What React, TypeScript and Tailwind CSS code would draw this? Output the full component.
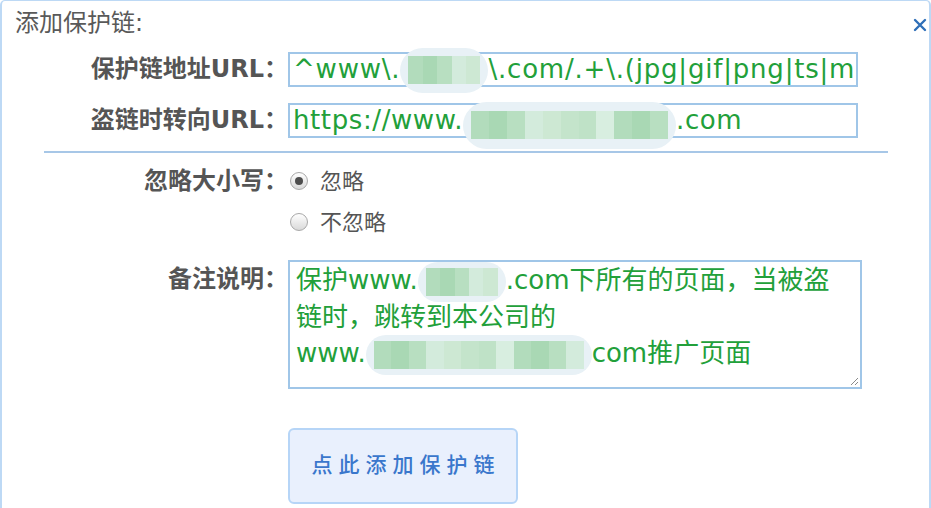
import React from 'react';

const tones = [
  'bg-[#c4e4cb]',
  'bg-[#b2dcbc]',
  'bg-[#d3ebdc]',
  'bg-[#bfe2c7]',
  'bg-[#a9d8b4]',
  'bg-[#cde8d3]',
  'bg-[#d8eee0]',
  'bg-[#b8dfc1]',
];

// pixelated blob covering the hidden domain
const Blur = ({ className, cells }: { className: string; cells: number }) => (
  <span
    className={`inline-flex items-center align-middle rounded-full bg-[#e8f1f6] px-[8px] ${className}`}
  >
    <span className="flex h-[28px] w-full">
      {Array.from({ length: cells }).map((_, i) => (
        <span key={i} className={`flex-1 ${tones[(i * 3 + 1) % tones.length]}`} />
      ))}
    </span>
  </span>
);

const Radio = ({ checked }: { checked?: boolean }) => (
  <span className="flex h-[18px] w-[18px] shrink-0 items-center justify-center rounded-full border border-[#a8a8a8] bg-linear-to-b from-white to-[#d9d9d9]">
    {checked && <span className="h-[8px] w-[8px] rounded-full bg-[#4d4d4d]" />}
  </span>
);

const Label = ({ children, className = '' }: { children: React.ReactNode; className?: string }) => (
  <span className={`w-[286px] shrink-0 text-right text-[24px] font-bold text-[#555] ${className}`}>
    {children}
  </span>
);

export default function App() {
  return (
    <div className="h-[508px] w-[931px] overflow-hidden rounded-t-[5px] border-x-2 border-t border-[#bdd9f5] bg-white font-['DejaVu_Sans','Noto_Sans_CJK_SC',sans-serif]">
      <div className="flex items-start justify-between pl-[13px] pr-[2px] pt-[8px]">
        <h3 className="text-[24px] leading-[28px] text-[#595959]">添加保护链:</h3>
        <svg width="14" height="14" viewBox="0 0 14 14" className="mt-[9px]">
          <path d="M2 2L12 12M12 2L2 12" stroke="#2f6fb8" strokeWidth="2.4" strokeLinecap="round" />
        </svg>
      </div>

      <div className="mt-[14px] flex items-center">
        <Label>保护链地址URL：</Label>
        <div className="h-[35px] w-[570px] overflow-x-clip whitespace-nowrap border-2 border-[#a0c6e8] px-[3px] text-[26px] leading-[31px] tracking-[0.8px] text-[#22a03a]">
          ^www\.<Blur className="-my-[7px] h-[45px] w-[88px]" cells={5} />\.com/.+\.(jpg|gif|png|ts|m
        </div>
      </div>

      <div className="mt-[15px] flex items-center">
        <Label>盗链时转向URL：</Label>
        <div className="h-[35px] w-[570px] overflow-x-clip whitespace-nowrap border-2 border-[#a0c6e8] px-[3px] text-[26px] leading-[31px] tracking-[0.6px] text-[#22a03a]">
          https://www.<Blur className="relative top-[4px] -my-[8px] h-[47px] w-[213px]" cells={11} />.com
        </div>
      </div>

      <div className="ml-[42px] mt-[13px] h-[2px] w-[844px] bg-[#a7c7e7]" />

      <div className="mt-[11px] flex h-[34px] items-center">
        <Label>忽略大小写：</Label>
        <label className="ml-[2px] flex items-center gap-[12px] text-[22px] text-[#555]">
          <Radio checked />
          忽略
        </label>
      </div>
      <div className="mt-[7px] flex h-[34px] items-center">
        <span className="w-[286px] shrink-0" />
        <label className="ml-[2px] flex items-center gap-[12px] text-[22px] text-[#555]">
          <Radio />
          不忽略
        </label>
      </div>

      <div className="mt-[21px] flex items-start">
        <Label className="pt-[1px] leading-[36px]">备注说明：</Label>
        <div className="relative h-[129px] w-[574px] border-2 border-[#a0c6e8] px-[6px] text-[26px] leading-[36.5px] text-[#22a03a]">
          <div className="whitespace-nowrap">
            保护www.<Blur className="-my-[4px] h-[40px] w-[88px]" cells={5} />.com下所有的页面，当被盗
          </div>
          <div className="whitespace-nowrap">链时，跳转到本公司的</div>
          <div className="whitespace-nowrap">
            www.<Blur className="-my-[4px] h-[40px] w-[226px]" cells={12} />com推广页面
          </div>
          <svg width="11" height="11" viewBox="0 0 11 11" className="absolute bottom-[1px] right-[1px]">
            <path d="M10 3L3 10M10 7L7 10" stroke="#8a8a8a" strokeWidth="1" />
          </svg>
        </div>
      </div>

      <button className="ml-[286px] mt-[39px] flex h-[76px] w-[230px] items-center justify-center rounded-[6px] border-2 border-[#b6d5f7] bg-[#e9f0fd] pl-[6px] text-[21px] font-medium tracking-[6px] text-[#3a77cc]">
        点此添加保护链
      </button>
    </div>
  );
}
